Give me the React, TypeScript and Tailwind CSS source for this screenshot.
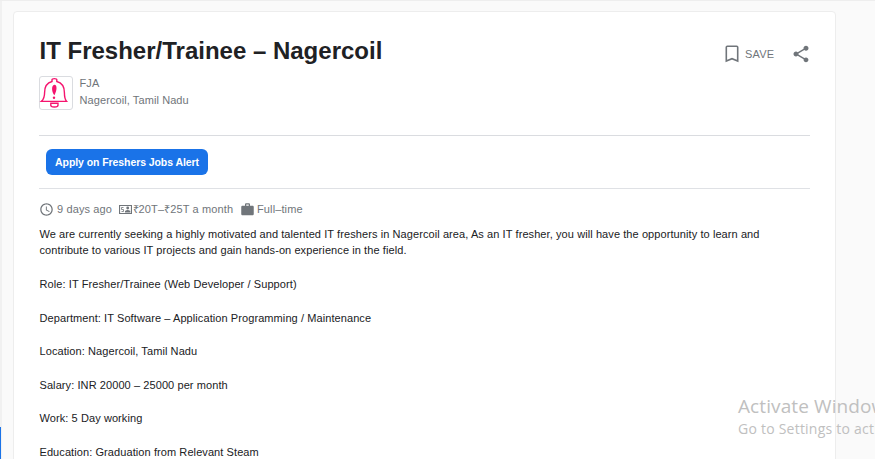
import React from 'react';

const details = [
  'Role: IT Fresher/Trainee (Web Developer / Support)',
  'Department: IT Software – Application Programming / Maintenance',
  'Location: Nagercoil, Tamil Nadu',
  'Salary: INR 20000 – 25000 per month',
  'Work: 5 Day working',
  'Education: Graduation from Relevant Steam',
];

function BellLogo() {
  return (
    <svg viewBox="0 0 34 34" className="h-[34px] w-[34px]" fill="none" stroke="#f5146e" strokeWidth="1.4">
      <path d="M13 5.5V3.8Q13 2.6 15.4 2.6T17.8 3.8V5.5C23.5 7 25.4 11.5 25.4 16.5C25.4 21 25.8 23.3 27.6 25.4H2.4C4.8 23.3 5.6 21 5.6 16.5C5.6 11.5 7.3 7 13 5.5Z" />
      <path d="M11.8 27.3C11.3 30.8 13 31 15.4 31S19.5 30.8 19 27.3Z" />
      <path d="M15.4 8.8C18.6 9 17.8 15 15.4 19.2C12.6 16.5 12 9.2 15.4 8.8Z" fill="#f5146e" stroke="none" />
      <circle cx="15" cy="21.7" r="1.2" fill="#f5146e" stroke="none" />
    </svg>
  );
}

export default function App() {
  return (
    <div className="relative flex h-[459px] w-[875px] overflow-hidden border-t border-[#eeeeee] bg-[#fafafa] font-['Liberation_Sans',Arial,sans-serif]">
      <div className="flex w-[2px] flex-col bg-[#f1f1f1]">
        <div className="mt-[426px] w-px flex-1 bg-[#1a73e8]" />
      </div>
      <main className="ml-[11px] mt-[10px] h-[460px] w-[823px] rounded-t border border-[#ededed] bg-white px-[25px]">
        <header className="flex h-[64px] items-start justify-between">
          <h1 className="ml-[0.5px] mt-[24px] whitespace-nowrap text-[24px] font-bold leading-[30px] text-[#202124]">
            IT Fresher/Trainee – Nagercoil
          </h1>
          <div className="-mr-px mt-[32px] flex items-center text-[#70757a]">
            <svg viewBox="0 0 14 18" className="h-[18px] w-[14px]" fill="none" stroke="currentColor" strokeWidth="1.6">
              <path d="M1.3 16V2.3Q1.3 1.3 2.3 1.3H11.7Q12.7 1.3 12.7 2.3V16L7 13.7Z" />
            </svg>
            <span className="ml-[6px] w-[30px] text-[11px] leading-4 tracking-[0.15px]">SAVE</span>
            <svg viewBox="0 0 24 24" className="ml-[16px] h-5 w-5" fill="currentColor">
              <path d="M18 16.08c-.76 0-1.44.3-1.96.77L8.91 12.7c.05-.23.09-.46.09-.7s-.04-.47-.09-.7l7.05-4.11c.54.5 1.25.81 2.04.81 1.66 0 3-1.34 3-3s-1.34-3-3-3-3 1.34-3 3c0 .24.04.47.09.7L8.04 9.81C7.5 9.31 6.79 9 6 9c-1.66 0-3 1.34-3 3s1.34 3 3 3c.79 0 1.5-.31 2.04-.81l7.12 4.16c-.05.21-.08.43-.08.65 0 1.61 1.31 2.92 2.92 2.92s2.92-1.31 2.92-2.92-1.31-2.92-2.92-2.92z" />
            </svg>
          </div>
        </header>
        <section className="flex h-[60px] border-b border-[#dadce0]">
          <div className="h-[34px] w-[34px] rounded-[3px] border border-[#dadce0]">
            <div className="-ml-px -mt-px"><BellLogo /></div>
          </div>
          <div className="-mt-px ml-[6.5px] text-[11px] leading-[17px] tracking-[0.09px] text-[#70757a]">
            <div>FJA</div>
            <div>Nagercoil, Tamil Nadu</div>
          </div>
        </section>
        <section className="flex h-[53px] border-b border-[#dfe1e5] pl-[7px] pt-[13px]">
          <button className="h-[26px] w-[162px] whitespace-nowrap rounded-[6px] bg-[#1a73e8] text-[10.5px] font-bold leading-[26px] tracking-[-0.08px] text-white">
            Apply on Freshers Jobs Alert
          </button>
        </section>
        <div className="mt-[12px] flex h-4 items-center whitespace-nowrap text-[11px] leading-4 tracking-[0.12px] text-[#70757a]">
          <svg viewBox="0 0 24 24" className="h-[15px] w-[15px]" fill="currentColor">
            <path d="M11.99 2C6.47 2 2 6.48 2 12s4.47 10 9.99 10C17.52 22 22 17.52 22 12S17.52 2 11.99 2zM12 20c-4.42 0-8-3.58-8-8s3.58-8 8-8 8 3.58 8 8-3.58 8-8 8zm.5-13H11v6l5.25 3.15.75-1.23-4.5-2.67z" />
          </svg>
          <span className="ml-[3px] w-[62px]">9 days ago</span>
          <svg viewBox="0 0 13 9" className="h-[9px] w-[13px]" fill="none" stroke="currentColor">
            <path d="M.5.5h12v8H.5z" strokeWidth="1.2" />
            <path d="M4.5 2.5h-2v2h2v2h-2" strokeWidth=".8" />
            <circle cx="8.7" cy="3" r="1.4" fill="currentColor" stroke="none" />
            <path d="M6 7.5V6Q8.7 4 11.3 6v1.5z" fill="currentColor" stroke="none" />
          </svg>
          <span className="ml-[0.5px] w-[107px]">₹20T–₹25T a month</span>
          <svg viewBox="0 0 24 24" className="h-[15px] w-[15px]" fill="currentColor">
            <path d="M20 6h-4V4c0-1.11-.89-2-2-2h-4c-1.11 0-2 .89-2 2v2H4c-1.11 0-1.99.89-1.99 2L2 19c0 1.11.89 2 2 2h16c1.11 0 2-.89 2-2V8c0-1.11-.89-2-2-2zm-6 0h-4V4h4v2z" />
          </svg>
          <span className="ml-[2.5px]">Full–time</span>
        </div>
        <article className="ml-[0.5px] mt-[8.6px] whitespace-nowrap text-[11px] leading-[16.8px] tracking-[0.085px] text-[#202124]">
          <p>
            We are currently seeking a highly motivated and talented IT freshers in Nagercoil area, As an IT fresher, you will have the opportunity to learn and
            <br />
            contribute to various IT projects and gain hands-on experience in the field.
          </p>
          {details.map((line) => (
            <p key={line} className="mt-[16.8px]">{line}</p>
          ))}
        </article>
      </main>
      <aside className="absolute left-[738px] top-[393px] whitespace-nowrap font-['Open_Sans','Noto_Sans',sans-serif] text-[#c0c0c0]">
        <div className="text-[19px] leading-[25px] tracking-[0.1px]">Activate Windows</div>
        <div className="text-[14px] leading-[20px] tracking-[0.23px]">Go to Settings to activate Windows.</div>
      </aside>
    </div>
  );
}
